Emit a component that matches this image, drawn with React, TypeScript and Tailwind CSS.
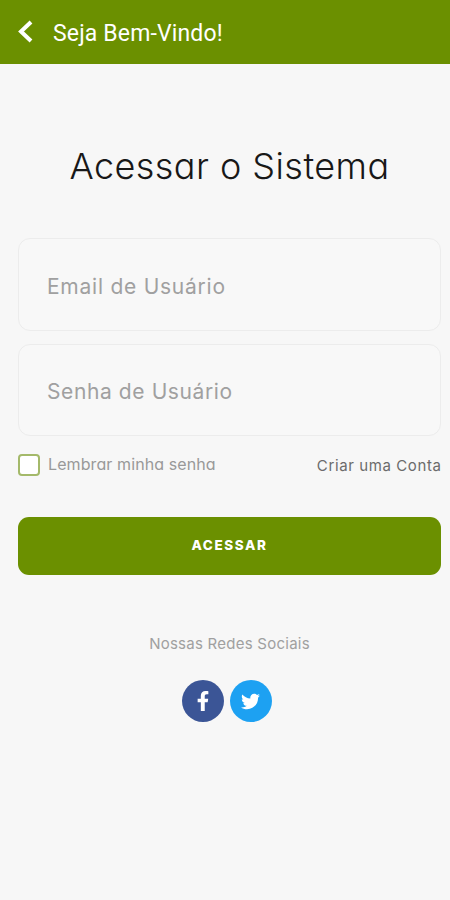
import { FaFacebookF, FaTwitter } from 'react-icons/fa';

const fields = [
    { name: 'email', type: 'email', placeholder: 'Email de Usuário', spacing: 'tracking-[0.75px]' },
    { name: 'password', type: 'password', placeholder: 'Senha de Usuário', spacing: 'tracking-[0.6px]' },
];

function Header() {
    return (
        <header className="flex h-16 items-center bg-[#6b9000] pl-[17px] text-white">
            <button type="button" aria-label="Voltar" className="flex w-[36px]">
                <svg width="18" height="24" viewBox="0 0 18 24" fill="none" stroke="currentColor" strokeWidth="4">
                    <path d="M14 2 4 11.5l10 9.5" />
                </svg>
            </button>
            <span className="pt-0.5 font-['Roboto',sans-serif] text-[23px] leading-none tracking-[0.15px]">
                Seja Bem-Vindo!
            </span>
        </header>
    );
}

export default function App() {
    return (
        <main className="h-[900px] w-[450px] overflow-hidden bg-[#f7f7f7] font-['Inter',sans-serif]">
            <Header />

            <form className="pt-[79px] pr-[9px] pl-[18px]" onSubmit={(e) => e.preventDefault()}>
                <h1 className="text-center text-[36px] leading-[46px] font-[340] tracking-[0.45px] whitespace-nowrap text-[#181818] [font-feature-settings:'cv11']">
                    Acessar o Sistema
                </h1>

                <div className="mt-[49px] flex flex-col gap-[13px]">
                    {fields.map((field) => (
                        <input
                            key={field.name}
                            type={field.type}
                            placeholder={field.placeholder}
                            className={`h-[92.5px] w-full rounded-xl border-[1.5px] border-[#ececec] bg-[#f8f8f8] px-7 pt-1 text-[21px] placeholder:text-[#a0a0a0] ${field.spacing}`}
                        />
                    ))}
                </div>

                <div className="mt-[18px] flex h-[22px] items-center justify-between">
                    <label className="flex items-center gap-2">
                        <input
                            type="checkbox"
                            className="size-[22px] appearance-none rounded-[4px] border-2 border-[#a4b96a] bg-white"
                        />
                        <span className="pb-0.5 text-[16px] leading-none tracking-[0.1px] text-[#999] [font-feature-settings:'cv11']">
                            Lembrar minha senha
                        </span>
                    </label>
                    <a className="-mr-[0.5px] text-[15px] leading-none tracking-[0.6px] text-[#6b6b6b]">
                        Criar uma Conta
                    </a>
                </div>

                <button
                    type="submit"
                    className="mt-[40.5px] flex h-[58px] w-full items-center justify-center rounded-[11px] bg-[#6b9000] text-[13.5px] font-extrabold tracking-[1.6px] text-white"
                >
                    ACESSAR
                </button>
            </form>

            <section className="flex flex-col items-center pt-[59px] pl-[9px]">
                <p className="text-[15px] leading-[20px] tracking-[0.25px] text-[#a0a0a0]">Nossas Redes Sociais</p>
                <div className="mt-[26.5px] mr-[5px] flex gap-1.5 text-white">
                    <a aria-label="Facebook" className="flex size-[42px] items-center justify-center rounded-full bg-[#3b5596]">
                        <FaFacebookF size={20} />
                    </a>
                    <a aria-label="Twitter" className="flex size-[42px] items-center justify-center rounded-full bg-[#1da1f2] pr-px">
                        <FaTwitter size={19} />
                    </a>
                </div>
            </section>
        </main>
    );
}
